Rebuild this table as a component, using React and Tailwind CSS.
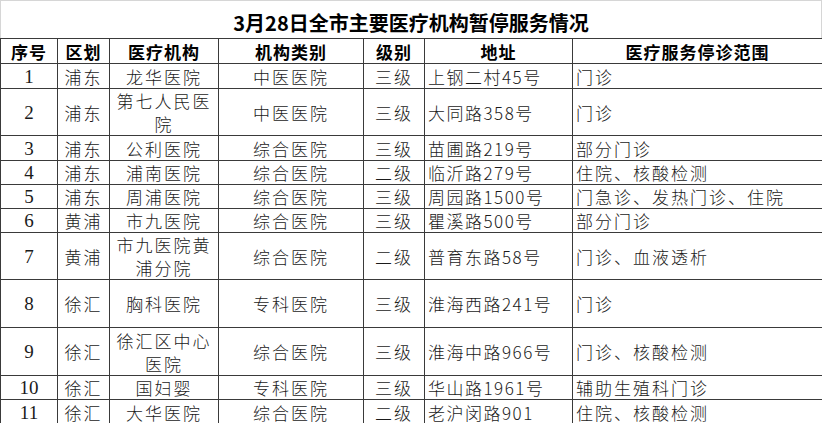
import React from "react";

const rows = [
  { n: "1", d: "浦东", name: ["龙华医院"], type: "中医医院", lv: "三级", addr: "上钢二村45号", scope: "门诊", h: "h-[25px]" },
  { n: "2", d: "浦东", name: ["第七人民医", "院"], type: "中医医院", lv: "三级", addr: "大同路358号", scope: "门诊", h: "h-[46px]" },
  { n: "3", d: "浦东", name: ["公利医院"], type: "综合医院", lv: "三级", addr: "苗圃路219号", scope: "部分门诊", h: "h-[25px]" },
  { n: "4", d: "浦东", name: ["浦南医院"], type: "综合医院", lv: "二级", addr: "临沂路279号", scope: "住院、核酸检测", h: "h-[24px]" },
  { n: "5", d: "浦东", name: ["周浦医院"], type: "综合医院", lv: "三级", addr: "周园路1500号", scope: "门急诊、发热门诊、住院", h: "h-[23px]" },
  { n: "6", d: "黄浦", name: ["市九医院"], type: "综合医院", lv: "三级", addr: "瞿溪路500号", scope: "部分门诊", h: "h-[24px]" },
  { n: "7", d: "黄浦", name: ["市九医院黄", "浦分院"], type: "综合医院", lv: "二级", addr: "普育东路58号", scope: "门诊、血液透析", h: "h-[47px]" },
  { n: "8", d: "徐汇", name: ["胸科医院"], type: "专科医院", lv: "三级", addr: "淮海西路241号", scope: "门诊", h: "h-[48px]" },
  { n: "9", d: "徐汇", name: ["徐汇区中心", "医院"], type: "综合医院", lv: "三级", addr: "淮海中路966号", scope: "门诊、核酸检测", h: "h-[48px]" },
  { n: "10", d: "徐汇", name: ["国妇婴"], type: "专科医院", lv: "三级", addr: "华山路1961号", scope: "辅助生殖科门诊", h: "h-[24px]" },
  { n: "11", d: "徐汇", name: ["大华医院"], type: "综合医院", lv: "二级", addr: "老沪闵路901", scope: "住院、核酸检测", h: "h-[25px]" },
];

export default function App() {
  return (
    <div className="w-[822px] h-[423px] bg-white overflow-hidden text-[#1a1a1a] [font-family:'Noto_Sans_CJK_SC','Noto_Sans',sans-serif]">
      <div className="h-[38px] border-t border-l border-r border-[#d6d6d6] flex items-end justify-center pb-[5px]">
        <span className="text-[20px] font-bold leading-none text-black">3月28日全市主要医疗机构暂停服务情况</span>
      </div>
      <table className="w-[822px] table-fixed border-collapse">
        <colgroup>
          <col className="w-[57px]" />
          <col className="w-[52px]" />
          <col className="w-[109px]" />
          <col className="w-[145px]" />
          <col className="w-[61px]" />
          <col className="w-[148px]" />
          <col className="w-[250px]" />
        </colgroup>
        <thead>
          <tr className="h-[25px]">
            {["序号", "区划", "医疗机构", "机构类别", "级别", "地址", "医疗服务停诊范围"].map((t) => (
              <th key={t} className="border border-[#3a3a3a] p-0 text-center align-middle text-[17px] font-bold leading-none tracking-[1px] text-black">
                {t}
              </th>
            ))}
          </tr>
        </thead>
        <tbody>
          {rows.map((r) => (
            <tr key={r.n} className={r.h}>
              <td className="border border-[#3a3a3a] p-0 text-center align-middle text-[19px] leading-none [font-family:'Liberation_Serif',serif]">{r.n}</td>
              <td className="border border-[#3a3a3a] p-0 text-center align-middle text-[17px] font-light leading-none tracking-[2px]">{r.d}</td>
              <td className="border border-[#3a3a3a] p-0 text-center align-middle text-[17px] font-light leading-[23px] tracking-[2px]">
                {r.name.map((l, i) => (
                  <div key={i}>{l}</div>
                ))}
              </td>
              <td className="border border-[#3a3a3a] p-0 text-center align-middle text-[17px] font-light leading-none tracking-[2px]">{r.type}</td>
              <td className="border border-[#3a3a3a] p-0 text-center align-middle text-[17px] font-light leading-none tracking-[2px]">{r.lv}</td>
              <td className="border border-[#3a3a3a] py-0 pl-[3px] pr-0 text-left align-middle text-[17px] font-light leading-none tracking-[1.5px] whitespace-nowrap">{r.addr}</td>
              <td className="border border-[#3a3a3a] py-0 pl-[3px] pr-0 text-left align-middle text-[17px] font-light leading-none tracking-[2px] whitespace-nowrap">{r.scope}</td>
            </tr>
          ))}
        </tbody>
      </table>
    </div>
  );
}
